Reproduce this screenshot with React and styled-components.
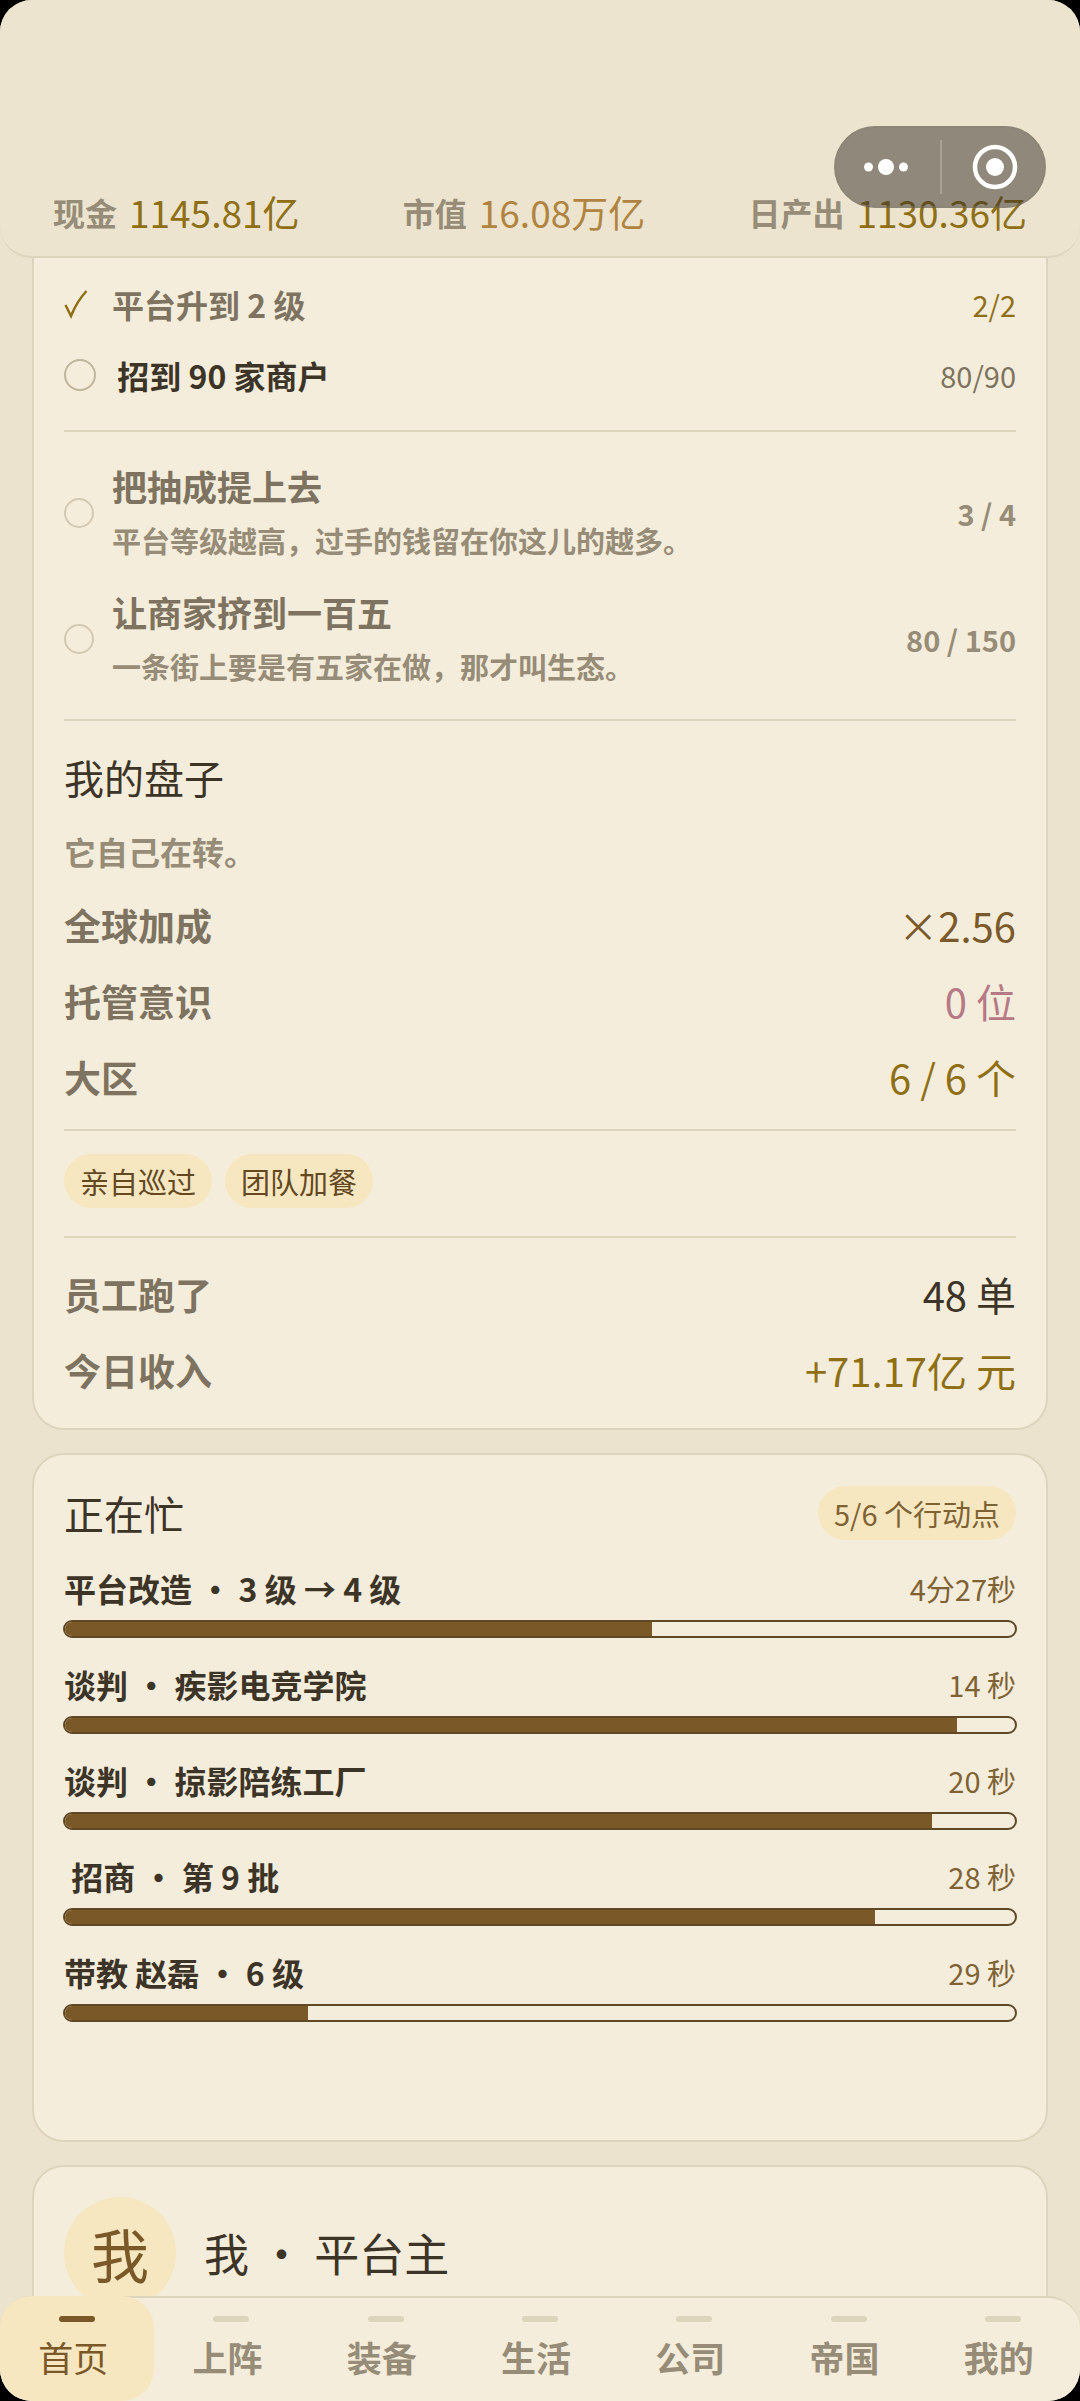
import styled, { createGlobalStyle } from "styled-components";

// Data
const stats = [
    { label: "现金", value: "1145.81亿", color: "#8f6f14" },
    { label: "市值", value: "16.08万亿", color: "#b08440" },
    { label: "日产出", value: "1130.36亿", color: "#8f6f14" },
];

const nextGoals = [
    { title: "把抽成提上去", text: "平台等级越高，过手的钱留在你这儿的越多。", count: "3 / 4" },
    { title: "让商家挤到一百五", text: "一条街上要是有五家在做，那才叫生态。", count: "80 / 150" },
];

const platform = [
    { label: "全球加成", value: "×2.56", color: "#7a5a2a" },
    { label: "托管意识", value: "0 位", color: "#b57a86" },
    { label: "大区", value: "6 / 6 个", color: "#8f6f14" },
];

const today = [
    { label: "员工跑了", value: "48 单", color: "#3d3428" },
    { label: "今日收入", value: "+71.17亿 元", color: "#8f6f14" },
];

const tasks = [
    { name: "平台改造 · 3 级 → 4 级", time: "4分27秒", percent: 61.8 },
    { name: "谈判 · 疾影电竞学院", time: "14 秒", percent: 93.9 },
    { name: "谈判 · 掠影陪练工厂", time: "20 秒", percent: 91.3 },
    { name: " 招商 · 第 9 批", time: "28 秒", percent: 85.3 },
    { name: "带教 赵磊 · 6 级", time: "29 秒", percent: 25.6 },
];

const tabs = ["首页", "上阵", "装备", "生活", "公司", "帝国", "我的"];

const App = () => {
    return(
        <>
            <GlobalStyle />
            <Screen>
                <Header>
                    {stats.map((stat) => (
                        <Stat key={stat.label}>
                            <StatLabel>{stat.label}</StatLabel>
                            <StatValue $color={stat.color}>{stat.value}</StatValue>
                        </Stat>
                    ))}
                </Header>

                <Capsule>
                    <CapsuleBtn aria-label="更多">
                        <svg width="48" height="20" viewBox="0 0 48 20" fill="#fff">
                            <circle cx="6.500" cy="10" r="4.500" />
                            <circle cx="24" cy="10" r="8" />
                            <circle cx="41.500" cy="10" r="4.500" />
                        </svg>
                    </CapsuleBtn>
                    <CapsuleLine />
                    <CapsuleBtn aria-label="关闭">
                        <svg width="46" height="46" viewBox="0 0 46 46" fill="none">
                            <circle cx="23" cy="23" r="20" stroke="#fff" strokeWidth="4.500" />
                            <circle cx="23" cy="23" r="9" fill="#fff" />
                        </svg>
                    </CapsuleBtn>
                </Capsule>

                <Main>
                    <Card $scrolled>
                        <GoalList>
                            <Goal>
                                <Check width="24" height="30" viewBox="0 0 24 30" fill="none">
                                    <path d="M1.500 16L7 27C11 17 16 9 22.500 2" stroke="#8f6f14" strokeWidth="2.500" />
                                </Check>
                                <GoalName $done>平台升到 2 级</GoalName>
                                <Count $color="#8f6f14">2/2</Count>
                            </Goal>
                            <Goal>
                                <Ring $size={32} />
                                <GoalName> 招到 90 家商户</GoalName>
                                <Count $color="#7d7360">80/90</Count>
                            </Goal>
                        </GoalList>
                        <Divider />
                        <GoalList>
                            {nextGoals.map((goal) => (
                                <NextGoal key={goal.title}>
                                    <Ring $size={30} $faded />
                                    <NextBody>
                                        <NextTitle>{goal.title}</NextTitle>
                                        <NextText>{goal.text}</NextText>
                                    </NextBody>
                                    <Count $color="#968c78" $bold>{goal.count}</Count>
                                </NextGoal>
                            ))}
                        </GoalList>
                        <Divider />
                        <Section>
                            <Title>我的盘子</Title>
                            <Note>它自己在转。</Note>
                            {platform.map((item) => (
                                <Pair key={item.label}>
                                    <PairLabel>{item.label}</PairLabel>
                                    <PairValue $color={item.color}>{item.value}</PairValue>
                                </Pair>
                            ))}
                        </Section>
                        <Divider />
                        <Chips>
                            <Chip>亲自巡过</Chip>
                            <Chip>团队加餐</Chip>
                        </Chips>
                        <Divider />
                        <Summary>
                            {today.map((item) => (
                                <Pair key={item.label}>
                                    <PairLabel>{item.label}</PairLabel>
                                    <PairValue $color={item.color}>{item.value}</PairValue>
                                </Pair>
                            ))}
                        </Summary>
                    </Card>

                    <Card>
                        <CardHead>
                            <Title>正在忙</Title>
                            <Chip $soft>5/6 个行动点</Chip>
                        </CardHead>
                        <TaskList>
                            {tasks.map((task) => (
                                <Task key={task.name}>
                                    <TaskHead>
                                        <TaskName>{task.name}</TaskName>
                                        <Count $color="#7f6234">{task.time}</Count>
                                    </TaskHead>
                                    <Track role="progressbar" aria-label={task.name} aria-valuenow={task.percent}>
                                        <Fill style={{ width: `${task.percent}%` }} />
                                    </Track>
                                </Task>
                            ))}
                        </TaskList>
                        <EmptySlot />
                    </Card>

                    <Card>
                        <Profile>
                            <Avatar>我</Avatar>
                            <ProfileName>我 · 平台主</ProfileName>
                        </Profile>
                    </Card>
                </Main>

                <TabBar>
                    {tabs.map((tab, i) => (
                        <Tab key={tab} href="#" $active={i === 0}>
                            <TabMark $active={i === 0} />
                            <TabText>{tab}</TabText>
                        </Tab>
                    ))}
                </TabBar>
            </Screen>
        </>
    )
}

export default App;

const GlobalStyle = createGlobalStyle`
    * {
        box-sizing: border-box;
    }

    body {
        margin: 0;
        background: #000;
        color: #3d3428;
        font-family: "Noto Sans CJK SC", "Noto Sans", sans-serif;
    }

    h2, p, ul {
        margin: 0;
        padding: 0;
        font-weight: 400;
        list-style: none;
    }
`;

const Screen = styled.div`
    position: relative;
    display: flex;
    flex-direction: column;
    height: 100vh;
    overflow: hidden;
    border-radius: 32px;
    background: #ebe3cd;
`;

// Header
const Header = styled.header`
    position: relative;
    z-index: 1;
    flex-shrink: 0;
    display: flex;
    justify-content: space-between;
    padding: 188px 53px 20px;
    background: #ece4ce;
    border: 2px solid #ddd4be;
    border-width: 0 0 2px;
    border-radius: 0 0 32px 32px;
`;

const Stat = styled.div`
    display: flex;
    align-items: center;
    gap: 12px;
    line-height: 48px;
`;

const StatLabel = styled.span`
    font-size: 32px;
    font-weight: 700;
    color: #968c78;
`;

const StatValue = styled.span`
    font-size: 37px;
    color: ${({ $color }) => $color};
`;

// Mini program menu, floats over the header
const Capsule = styled.div`
    position: absolute;
    z-index: 2;
    top: 126px;
    right: 34px;
    display: flex;
    align-items: center;
    justify-content: space-between;
    width: 212px;
    height: 82px;
    padding: 0 26px;
    border: 2px solid rgba(140, 132, 116, 0.4);
    border-radius: 41px;
    background: rgba(51, 45, 40, 0.5);
`;

const CapsuleBtn = styled.button`
    display: flex;
    align-items: center;
    height: 100%;
    padding: 0;
    border: none;
    background: none;
    cursor: pointer;
`;

const CapsuleLine = styled.span`
    width: 2px;
    height: 54px;
    background: rgba(255, 255, 255, 0.2);
`;

// Content
const Main = styled.main`
    flex: 1;
    min-height: 0;
    display: flex;
    flex-direction: column;
    gap: 23px;
    margin: -32px 0;
    padding: 0 32px;
    overflow: hidden;
`;

const Card = styled.section`
    flex-shrink: 0;
    padding: ${({ $scrolled }) => ($scrolled ? "42px 30px 20px" : "30px")};
    border: 2px solid #ddd4be;
    border-width: ${({ $scrolled }) => ($scrolled ? "0 2px 2px" : "2px")};
    border-radius: ${({ $scrolled }) => ($scrolled ? "0 0 32px 32px" : "32px")};
    background: #f5eddb;
`;

const Divider = styled.hr`
    height: 2px;
    margin: 0;
    border: none;
    background: #ddd4be;
`;

const GoalList = styled.ul`
    padding: 0 0 20px;

    hr + & {
        padding: 18px 0 17px;
    }
`;

const Goal = styled.li`
    display: flex;
    align-items: center;
    height: 71px;
`;

const Check = styled.svg`
    flex-shrink: 0;
    margin-right: 24px;
`;

const Ring = styled.span`
    flex-shrink: 0;
    width: ${({ $size }) => $size}px;
    height: ${({ $size }) => $size}px;
    margin-right: ${({ $faded }) => ($faded ? 18 : 14)}px;
    border: 2px solid ${({ $faded }) => ($faded ? "#d3c9b2" : "#bfb59d")};
    border-radius: 50%;
`;

const GoalName = styled.span`
    flex: 1;
    font-size: 32px;
    font-weight: 700;
    line-height: 42px;
    white-space: pre;
    color: ${({ $done }) => ($done ? "#7d7360" : "#3d3428")};
`;

const Count = styled.span`
    font-size: 29px;
    font-weight: ${({ $bold }) => ($bold ? 700 : 400)};
    line-height: 42px;
    color: ${({ $color }) => $color};
`;

const NextGoal = styled.li`
    display: flex;
    align-items: center;
    height: 126px;
`;

const NextBody = styled.div`
    flex: 1;
`;

const NextTitle = styled.p`
    font-size: 35px;
    font-weight: 700;
    line-height: 54px;
    color: #7d7360;
`;

const NextText = styled.p`
    font-size: 29px;
    font-weight: 700;
    line-height: 54px;
    color: #968c78;
`;

const Section = styled.div`
    padding: 29px 0 14px;
`;

const Title = styled.h2`
    font-size: 40px;
    line-height: 54px;
`;

const Note = styled.p`
    margin: 23px 0 12px;
    font-size: 32px;
    font-weight: 700;
    line-height: 48px;
    color: #968c78;
`;

const Pair = styled.div`
    display: flex;
    align-items: center;
    justify-content: space-between;
    height: 76px;
`;

const PairLabel = styled.span`
    font-size: 37px;
    font-weight: 700;
    color: #7d7360;
`;

const PairValue = styled.span`
    font-size: 40px;
    color: ${({ $color }) => $color};
`;

const Chips = styled.div`
    display: flex;
    gap: 13px;
    padding: 23px 0 28px;
`;

const Chip = styled.span`
    padding: 0 16px;
    border-radius: 27px;
    background: #f6e7c1;
    color: ${({ $soft }) => ($soft ? "#7f6234" : "#64481f")};
    font-size: 29px;
    line-height: 54px;
`;

const Summary = styled.div`
    padding-top: 18px;
`;

const CardHead = styled.div`
    display: flex;
    align-items: center;
    justify-content: space-between;
    height: 56px;
`;

const TaskList = styled.ul`
    display: flex;
    flex-direction: column;
    gap: 25px;
    margin-top: 26px;
`;

const Task = styled.li``;

const TaskHead = styled.div`
    display: flex;
    align-items: center;
    justify-content: space-between;
    margin-bottom: 11px;
`;

const TaskName = styled.span`
    font-size: 32px;
    font-weight: 700;
    line-height: 42px;
    white-space: pre;
`;

const Track = styled.div`
    height: 18px;
    margin: 0 -1px;
    border: 2px solid #5f4826;
    border-radius: 9px;
    overflow: hidden;
`;

const Fill = styled.div`
    height: 100%;
    background: #7a5828;
`;

const EmptySlot = styled.div`
    height: 88px;
`;

const Profile = styled.div`
    display: flex;
    align-items: center;
    gap: 28px;
`;

const Avatar = styled.div`
    width: 112px;
    height: 112px;
    border-radius: 50%;
    background: #f6e7c1;
    color: #7a5828;
    font-size: 58px;
    line-height: 112px;
    text-align: center;
`;

const ProfileName = styled.h2`
    font-size: 45px;
    line-height: 60px;
`;

// Bottom navigation
const TabBar = styled.nav`
    position: relative;
    z-index: 1;
    flex-shrink: 0;
    display: flex;
    border-top: 2px solid #ddd4be;
    border-radius: 32px 32px 0 0;
    background: #f5eddb;
`;

const Tab = styled.a`
    flex: 1;
    display: flex;
    flex-direction: column;
    align-items: center;
    margin-top: -2px;
    padding: 20px 0 18px;
    border-radius: 32px;
    background: ${({ $active }) => ($active ? "#f6e7c1" : "none")};
    color: ${({ $active }) => ($active ? "#7a5828" : "#968c78")};
    font-weight: ${({ $active }) => ($active ? 400 : 700)};
    text-decoration: none;
`;

const TabMark = styled.span`
    width: 36px;
    height: 6px;
    border-radius: 3px;
    background: ${({ $active }) => ($active ? "#7a5828" : "#ddd4be")};
`;

const TabText = styled.span`
    margin-top: 9px;
    padding-right: 8px;
    font-size: 35px;
    line-height: 52px;
`;
